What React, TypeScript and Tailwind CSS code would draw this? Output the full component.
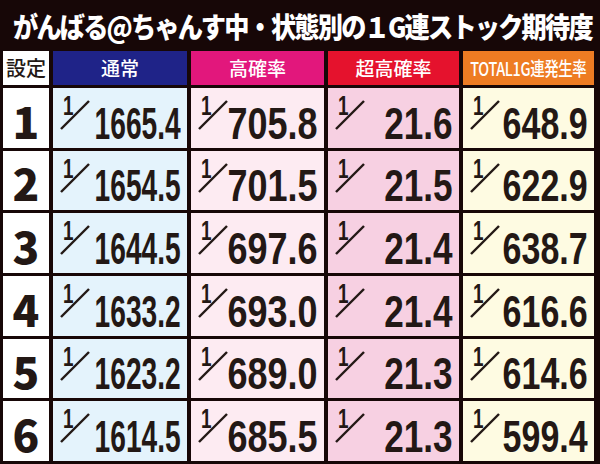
import React from 'react';

const jp = { fontFamily: '"Noto Sans CJK JP", "Noto Sans", sans-serif' };
const num = { fontFamily: '"Liberation Sans", Arial, sans-serif' };

type Col = {
  label: string;
  head: string;
  cell: string;
  scale: string;
};

const cols: Col[] = [
  { label: '通常', head: 'bg-[#1f2388]', cell: 'bg-[#e4f3fc]', scale: 'scale-x-[0.625]' },
  { label: '高確率', head: 'bg-[#e2177c]', cell: 'bg-[#fdebf2]', scale: 'scale-x-[0.8]' },
  { label: '超高確率', head: 'bg-[#e5122d]', cell: 'bg-[#f7d0e2]', scale: 'scale-x-[0.78]' },
  { label: 'TOTAL1G連発生率', head: 'bg-[#ee7c23]', cell: 'bg-[#fefbe2]', scale: 'scale-x-[0.755]' },
];

const rows = [
  ['1665.4', '705.8', '21.6', '648.9'],
  ['1654.5', '701.5', '21.5', '622.9'],
  ['1644.5', '697.6', '21.4', '638.7'],
  ['1633.2', '693.0', '21.4', '616.6'],
  ['1623.2', '689.0', '21.3', '614.6'],
  ['1614.5', '685.5', '21.3', '599.4'],
];

const Fraction: React.FC<{ value: string; col: Col }> = ({ value, col }) => (
  <div className={`${col.cell} flex items-start pl-[7px] pt-[5px] pr-[6px]`}>
    <div className="relative w-[30px] h-[38px] shrink-0">
      <span
        className="absolute left-[3px] top-0 text-[27px] leading-none font-bold text-[#231815] inline-block scale-x-[0.7] origin-left"
        style={num}
      >
        1
      </span>
      <svg className="absolute left-0 top-0" width="30" height="38" viewBox="0 0 30 38">
        <line x1="1" y1="36" x2="29" y2="8" stroke="#231815" strokeWidth="2.4" />
      </svg>
    </div>
    <div className="flex-1 min-w-0 flex justify-end self-center pt-[6px]">
      <span
        className={`shrink-0 whitespace-nowrap inline-block origin-right ${col.scale} text-[45px] leading-none font-bold text-[#231815]`}
        style={num}
      >
        {value}
      </span>
    </div>
  </div>
);

export default function App() {
  return (
    <div className="w-[600px] h-[464px] bg-[#170707] flex flex-col">
      <div className="h-[51px] flex items-center pl-[13px] pt-[1px]">
        <h1
          className="text-white text-[28px] font-black leading-none tracking-[-2px] whitespace-nowrap inline-block origin-left scale-x-[0.9]"
          style={jp}
        >
          がんばる@ちゃんす中・状態別の１G連ストック期待度
        </h1>
      </div>
      <div className="flex-1 grid grid-cols-[46px_134px_133px_131px_131px] grid-rows-[34px_repeat(6,1fr)] gap-x-[4px] gap-y-[3px] pl-[3px] pb-[3px]">
        <div className="bg-white flex items-center justify-center text-[20px] font-medium text-[#231815]" style={jp}>
          設定
        </div>
        {cols.map(c => (
          <div key={c.label} className={`${c.head} flex items-center justify-center`}>
            <span
              className={`text-white text-[19px] font-medium whitespace-nowrap inline-block ${
                c.label.startsWith('TOTAL') ? 'scale-x-[0.76] tracking-[-0.5px]' : ''
              }`}
              style={jp}
            >
              {c.label}
            </span>
          </div>
        ))}
        {rows.map((r, i) => (
          <React.Fragment key={i}>
            <div
              className="bg-white flex items-center justify-center text-[44px] font-black text-[#231815] leading-none pt-[4px]"
              style={jp}
            >
              {i + 1}
            </div>
            {r.map((v, j) => (
              <Fraction key={j} value={v} col={cols[j]} />
            ))}
          </React.Fragment>
        ))}
      </div>
    </div>
  );
}
